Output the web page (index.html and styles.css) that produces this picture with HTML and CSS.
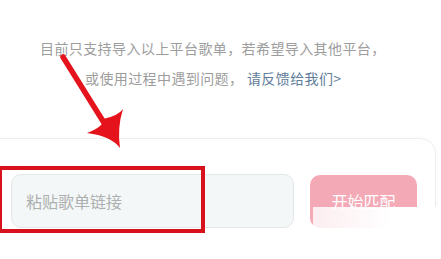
FILE: index.html
```html
<!DOCTYPE html>
<html lang="zh">
<head>
<meta charset="utf-8">
<link rel="stylesheet" href="styles.css">
</head>
<body>
<div class="page">
  <div class="notice">
    <p class="line line1">目前只支持导入以上平台歌单，若希望导入其他平台，</p>
    <p class="line line2">或使用过程中遇到问题， <span class="link">请反馈给我们&gt;</span></p>
  </div>
  <div class="card">
    <div class="row">
      <div class="input">粘贴歌单链接</div>
      <div class="btn">开始匹配</div>
    </div>
  </div>
  <div class="redbox"></div>
  <svg class="arrow" width="441" height="259" viewBox="0 0 441 259">
    <line x1="63" y1="57" x2="106" y2="126" stroke="#e5141c" stroke-width="5.5" stroke-linecap="round"/>
    <path d="M120 148 Q111 136 87 133 Q105 126 103 119 Q118 116 123 109 Q117 128 120 148 Z" fill="#e5141c"/>
  </svg>
  <div class="wm"></div>
</div>
</body>
</html>
```
FILE: styles.css
```css
html, body {
  margin: 0;
  padding: 0;
  background: #ffffff;
}
.page {
  position: relative;
  width: 441px;
  height: 259px;
  overflow: hidden;
  font-family: "Noto Sans CJK SC", "Noto Sans", sans-serif;
}
.notice {
  padding-top: 33px;
  height: 138px;
  box-sizing: border-box;
}
.line {
  margin: 0;
  font-size: 14px;
  letter-spacing: 0.4px;
  line-height: 30px;
  color: #9d9d9d;
  white-space: nowrap;
}
.line1 {
  padding-left: 40px;
}
.line2 {
  padding-left: 85px;
}
.link {
  color: #5e7c99;
}
.card {
  margin-left: -20px;
  width: 456px;
  height: 140px;
  box-sizing: border-box;
  border: 1px solid #eeeeee;
  border-radius: 16px;
  box-shadow: 0 0 4px rgba(0,0,0,0.03);
  padding: 35px 0 0 30px;
}
.row {
  display: flex;
  align-items: flex-start;
  gap: 16px;
}
.input {
  width: 283px;
  height: 54px;
  box-sizing: border-box;
  background: #f4f7f7;
  border: 1px solid #e2e8e8;
  border-radius: 10px;
  padding-left: 14px;
  font-size: 16px;
  line-height: 52px;
  color: #adb0b0;
}
.btn {
  margin-top: 1px;
  width: 107px;
  height: 53px;
  background: #f3a9b6;
  border-radius: 10px;
  color: #ffffff;
  font-size: 16px;
  line-height: 53px;
  text-align: center;
}
.redbox {
  position: absolute;
  left: -2px;
  top: 166px;
  width: 199px;
  height: 59px;
  border: 4px solid #d8121c;
}
.arrow {
  position: absolute;
  left: 0;
  top: 0;
}
.wm {
  position: absolute;
  left: 313px;
  top: 207px;
  width: 128px;
  height: 52px;
  background: linear-gradient(to right, rgba(255,255,255,0.8), rgba(255,255,255,1) 60%);
}
```
